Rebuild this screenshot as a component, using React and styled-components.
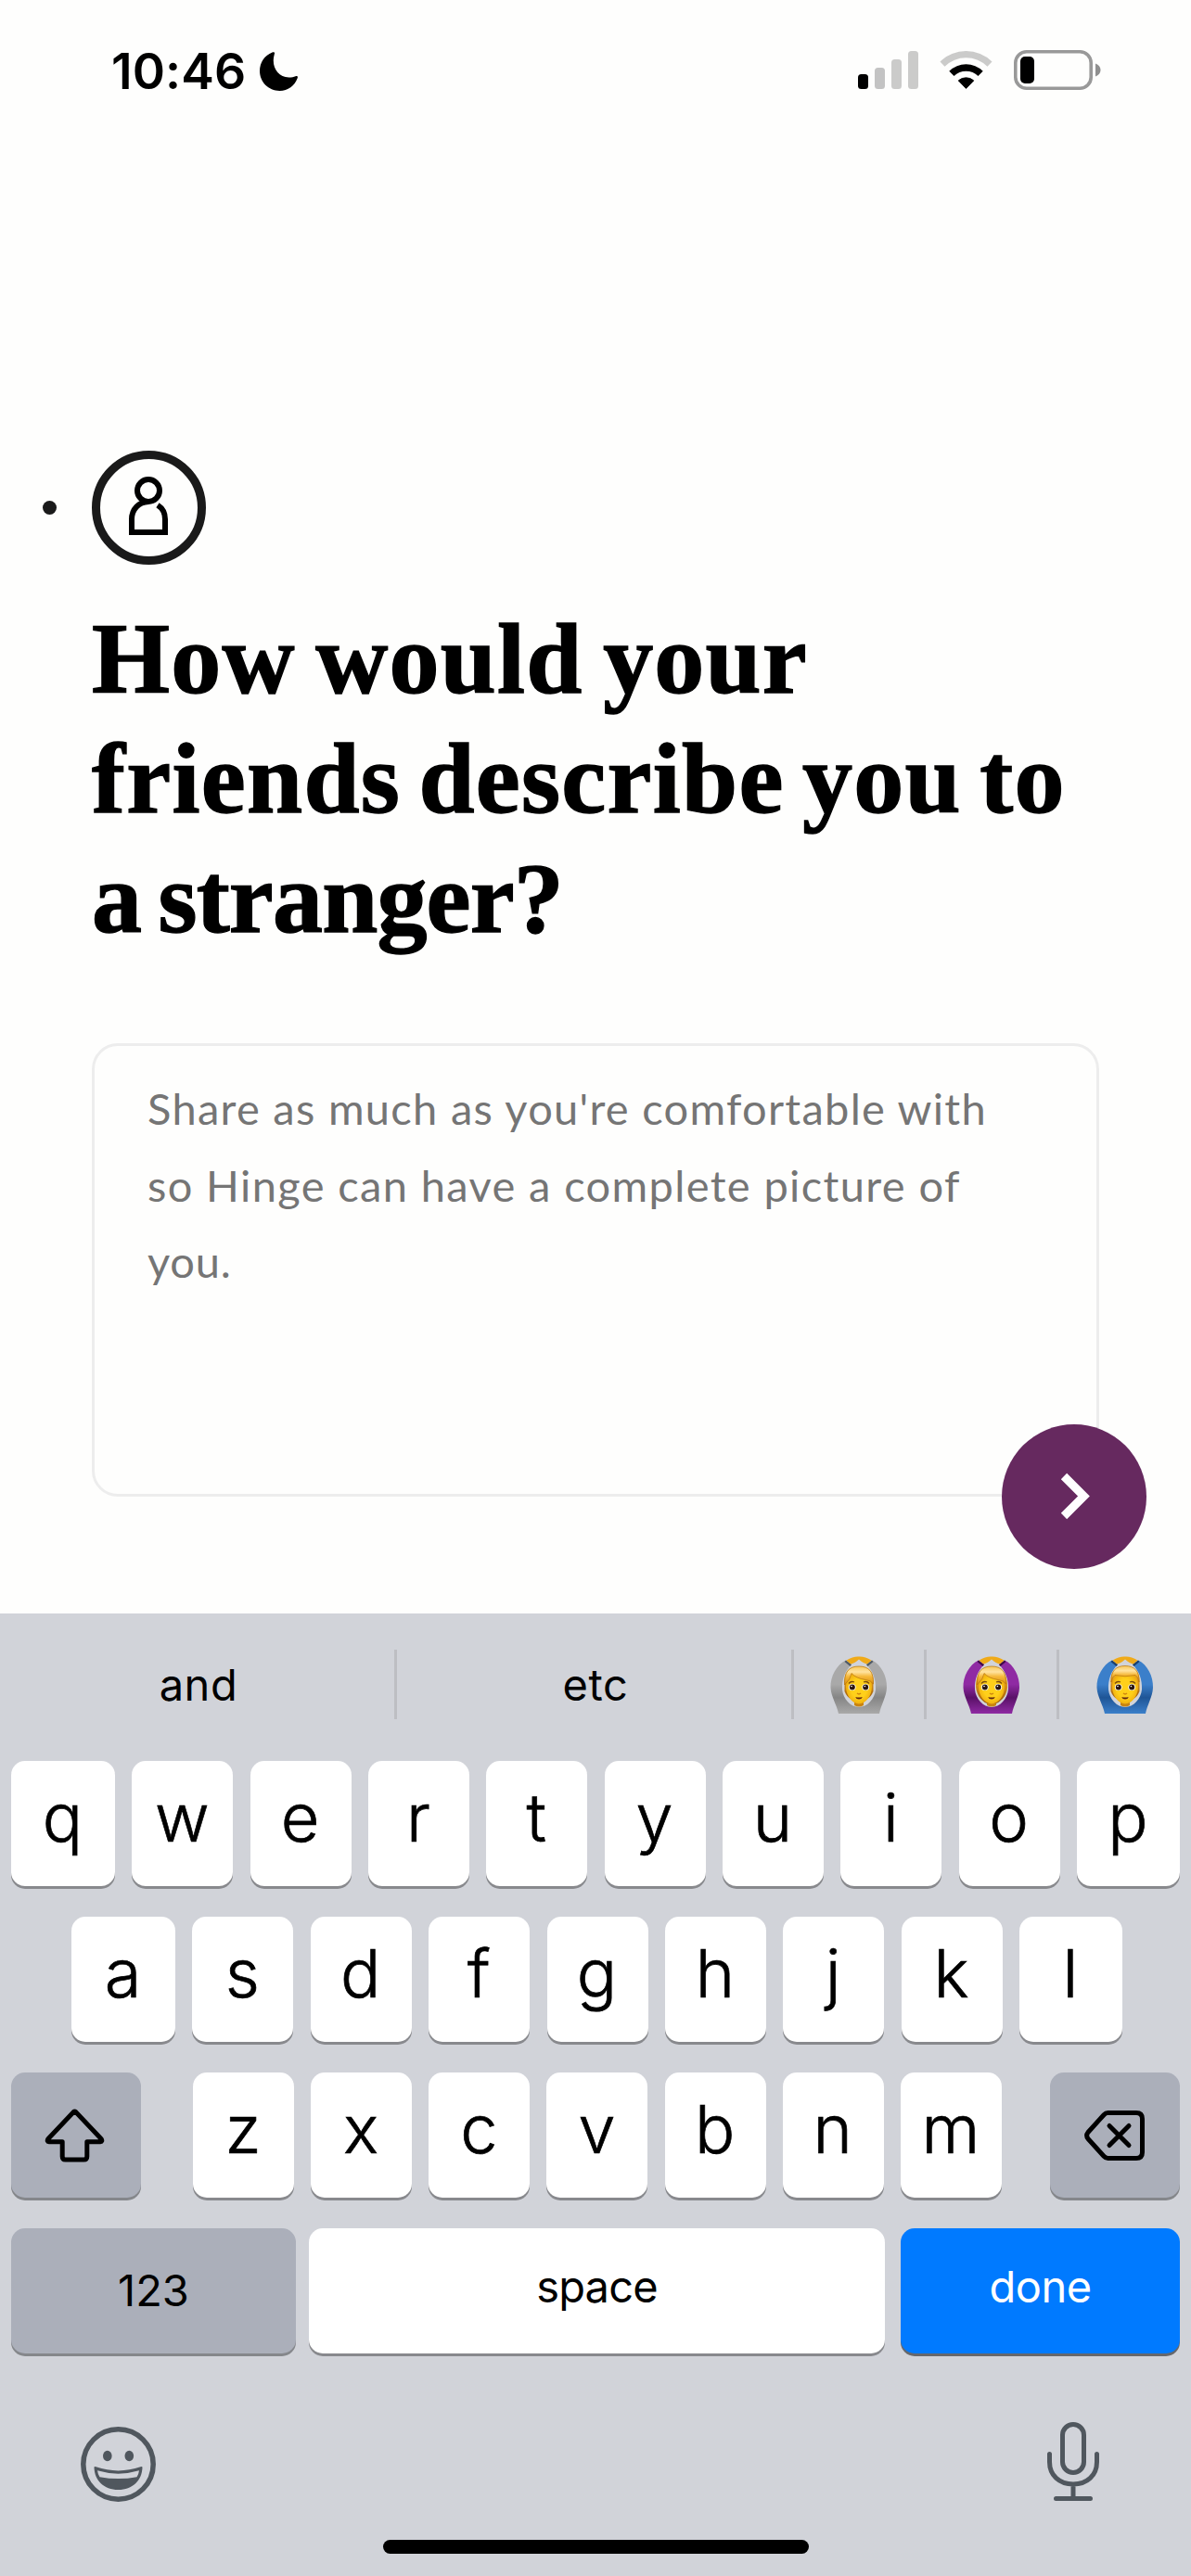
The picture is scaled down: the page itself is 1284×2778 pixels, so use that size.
import React from "react";
import styled, { createGlobalStyle } from "styled-components";

const sans = `Inter, "Liberation Sans", sans-serif`;

const GlobalStyle = createGlobalStyle`
  * { box-sizing: border-box; }
  body { margin: 0; background: #fefefd; }
`;

const Screen = styled.div`
  display: flex;
  flex-direction: column;
  width: 1284px;
  height: 2778px;
  overflow: hidden;
  background: #fefefd;
  color: #000;
  font-family: ${sans};
`;

const StatusBar = styled.header`
  display: flex;
  justify-content: space-between;
  align-items: center;
  flex: none;
  height: 154px;
  padding: 0 97px 0 120px;
`;

const Clock = styled.div`
  display: flex;
  align-items: center;
  gap: 15px;
`;

const Time = styled.span`
  width: 145px;
  font-size: 53.5px;
  font-weight: 600;
  letter-spacing: 0.1px;
  line-height: 60px;
  white-space: nowrap;
`;

const StatusIcons = styled.div`
  display: flex;
  align-items: center;
  gap: 23px;
  height: 43px;
  margin-bottom: 3px;
`;

const Main = styled.main`
  flex: none;
  height: 1586px;
  padding: 332px 99px 0;
`;

const StepRow = styled.div`
  display: flex;
  align-items: center;
  gap: 38px;
  height: 123px;
  margin-left: -53px;
`;

const StepDot = styled.span`
  width: 15px;
  height: 15px;
  border-radius: 50%;
  background: #1a1a1a;
`;

const StepBadge = styled.div`
  display: grid;
  place-items: center;
  width: 123px;
  height: 123px;
  padding: 0 1px 4px 0;
  border: 9px solid #1a1a1a;
  border-radius: 50%;
`;

const Question = styled.h1`
  height: 387px;
  margin: 37px -20px 0 0;
  font-family: "Liberation Serif", "Times New Roman", serif;
  font-size: 108px;
  font-weight: 700;
  line-height: 129px;
  -webkit-text-stroke: 1.4px #000;
`;

const QuestionLine = styled.span`
  display: block;
  letter-spacing: ${(p) => p.$spacing}px;
  word-spacing: ${(p) => p.$words}px;
  white-space: nowrap;
`;

const Answer = styled.div`
  position: relative;
  height: 489px;
  width: 1086px;
  margin-top: 92px;
  padding: 26px 57px;
  border: 3px solid #ededed;
  border-radius: 28px;
`;

const Placeholder = styled.p`
  margin: 0;
  color: #757575;
  font-family: Lato, "Open Sans", sans-serif;
  font-size: 47px;
  line-height: 82.5px;
`;

const PlaceholderLine = styled.span`
  display: block;
  letter-spacing: ${(p) => p.$spacing}px;
  white-space: nowrap;
`;

const NextButton = styled.button`
  position: absolute;
  right: -54px;
  bottom: -81px;
  display: grid;
  place-items: center;
  width: 156px;
  height: 156px;
  padding: 0;
  border: 0;
  border-radius: 50%;
  background: #66295f;
`;

const Keyboard = styled.section`
  display: flex;
  flex-direction: column;
  flex: 1;
  padding: 39px 12px 24px;
  background: #d1d3d9;
`;

const Suggestions = styled.div`
  display: flex;
  height: 75px;
  margin: 0 -12px 45px;
`;

const Suggestion = styled.div`
  display: flex;
  justify-content: center;
  align-items: center;
  flex: none;
  width: ${(p) => p.$width}px;
  padding-left: ${(p) => p.$inset || 0}px;
  border-right: ${(p) => (p.$last ? 0 : 3)}px solid #bdbec3;
  font-size: 47px;
  letter-spacing: 0.6px;
  line-height: 75px;
`;

const KeyRow = styled.div`
  display: flex;
  justify-content: space-between;
  height: 135px;
  margin: 0 ${(p) => p.$right || 0}px 33px ${(p) => p.$left || 0}px;
`;

const LetterGroup = styled.div`
  display: flex;
  justify-content: space-between;
  width: 872px;
  margin-left: 4px;
`;

const tones = {
  light: { bg: "#fff", fg: "#000", edge: "#88898d" },
  dark: { bg: "#abafba", fg: "#000", edge: "#85878b" },
  blue: { bg: "#007aff", fg: "#fff", edge: "#65676c" },
};

const Key = styled.button`
  display: flex;
  justify-content: center;
  flex: none;
  width: ${(p) => p.$width || 109}px;
  height: 135px;
  padding: 0 1px 0 0;
  border: 0;
  border-radius: 15px;
  background: ${(p) => tones[p.$tone || "light"].bg};
  box-shadow: 0 3px 0 ${(p) => tones[p.$tone || "light"].edge};
  color: ${(p) => tones[p.$tone || "light"].fg};
  font-family: ${sans};
  font-size: 72px;
  font-weight: 300;
  line-height: 122px;
  -webkit-text-stroke: 0.7px currentColor;
`;

const WordKey = styled(Key)`
  margin-left: ${(p) => p.$shift || 0}px;
  margin-right: ${(p) => -(p.$shift || 0)}px;
  padding: 0;
  font-size: 47px;
  font-weight: 400;
  letter-spacing: ${(p) => p.$spacing || 0}px;
  line-height: ${(p) => p.$line || 126}px;
  -webkit-text-stroke: 0;
`;

const IconKey = styled(Key)`
  align-items: center;
  padding-right: ${(p) => p.$nudge || 0}px;
`;

const Tools = styled.div`
  display: flex;
  justify-content: space-between;
  margin: 41px 87px 0 75px;
  height: 86px;
`;

const HomeBar = styled.div`
  width: 459px;
  height: 15px;
  margin: auto auto 0;
  border-radius: 7.5px;
  background: #000;
`;

const Moon = () => (
  <svg width="41" height="42" viewBox="0 0 41 42">
    <path d="M13.5 0.6C15.2 -0.2 16.6 0.4 15.8 2.4C12 15 19 27.5 31.5 27.5C34.5 27.5 36.5 27 38.6 26.2C40.5 25.5 41.3 26.6 40.7 28.2C37.5 36.5 30.5 42 21.5 42C9.5 42 0 32.5 0 20.6C0 11.5 5.3 3.8 13.5 0.6Z" />
  </svg>
);

const Signal = () => (
  <svg width="65" height="43" viewBox="0 0 65 43">
    <rect x="0" y="26" width="11" height="16" rx="3.5" />
    <rect x="18" y="19" width="11" height="23" rx="3.5" fill="#c3c3c3" />
    <rect x="36" y="10" width="11" height="32" rx="3.5" fill="#cbcbca" />
    <rect x="54" y="1" width="11" height="41" rx="3.5" fill="#cbcbca" />
  </svg>
);

const Wifi = () => (
  <svg width="57" height="43" viewBox="0 0 57 43">
    <path d="M0.5 12.5A40 40 0 0 1 56.5 12.5L51.5 17.8A32.5 32.5 0 0 0 5.5 17.8Z" fill="#cbcbca" />
    <path d="M10.3 22.8A26 26 0 0 1 46.7 22.8L41.5 28A18.6 18.6 0 0 0 15.5 28Z" />
    <path d="M20.2 32.9A12.5 12.5 0 0 1 36.8 32.9L28.5 41.5Z" strokeLinejoin="round" stroke="#000" strokeWidth="0.8" />
  </svg>
);

const Battery = () => (
  <svg width="94" height="43" viewBox="0 0 94 43">
    <rect x="1.8" y="1.8" width="81.4" height="39.4" rx="12" fill="none" stroke="#999" strokeWidth="3.6" />
    <rect x="7" y="7" width="15" height="29" rx="5" />
    <path d="M88 14.5C91.5 15.8 93.5 18.3 93.5 21.5S91.5 27.2 88 28.5Z" fill="#8f8f8f" />
  </svg>
);

const PersonIcon = () => (
  <svg width="42" height="63" viewBox="0 0 42 63" fill="none" stroke="#000" strokeWidth="6">
    <circle cx="21" cy="15" r="12" />
    <path d="M21 27C10.5 27.5 3 35 3 46V60H39V46C39 39.5 36 34 31 30.8" />
  </svg>
);

const Chevron = () => (
  <svg width="60" height="60" viewBox="0 0 60 60" fill="none" stroke="#fff" strokeWidth="9">
    <path d="M19 8L40.5 29.5L19 51" />
  </svg>
);

const ShiftIcon = () => (
  <svg width="66" height="60" viewBox="0 0 66 60" fill="none" stroke="#000" strokeWidth="5" strokeLinejoin="round">
    <path d="M31.2 4.7Q32.5 3.5 33.8 4.7L61 33.5Q63 36.5 60 36.8H45.8V52.5Q45.8 56 42.5 56H22.5Q19.2 56 19.2 52.5V36.8H5Q2 36.5 4 33.5Z" />
  </svg>
);

const DeleteIcon = () => (
  <svg width="66" height="56" viewBox="0 0 66 56" fill="none" stroke="#000" strokeWidth="5" strokeLinecap="round" strokeLinejoin="round">
    <path d="M25.5 3.5H56Q62.5 3.5 62.5 10V46Q62.5 52.5 56 52.5H25.5Q23 52.5 21 50.3L4 31.5Q1.3 28 4 24.5L21 5.7Q23 3.5 25.5 3.5Z" />
    <path d="M27 17.5L48 38.5M48 17.5L27 38.5" />
  </svg>
);

const SmileIcon = () => (
  <svg width="81" height="86" viewBox="0 -4.5 81 86" fill="none">
    <circle cx="40.5" cy="41" r="37.7" stroke="#50575e" strokeWidth="5.5" />
    <ellipse cx="28.8" cy="32" rx="4.8" ry="5.8" fill="#50575e" />
    <ellipse cx="52.3" cy="32" rx="4.8" ry="5.8" fill="#50575e" />
    <path d="M14.5 44.5Q14.5 43 16.5 43.8Q40.5 52 64.5 43.8Q66.5 43 66.5 44.5C66 58.5 56 68.5 40.5 68.5S15 58.5 14.5 44.5Z" fill="#50575e" />
    <path d="M18 47.8Q40.5 54.5 63 47.8Q62.5 52 60.5 54.7Q40.5 58.5 20.5 54.7Q18.5 52 18 47.8Z" fill="#d1d3d9" />
  </svg>
);

const MicIcon = () => (
  <svg width="56" height="86" viewBox="0 0 56 86" fill="none" stroke="#50575e" strokeWidth="5" strokeLinecap="round">
    <rect x="16.5" y="2.5" width="23" height="52" rx="11.5" />
    <path d="M2.5 34.5V43C2.5 57.5 13 67 28 67S53.5 57.5 53.5 43V34.5M28 67V81M9.5 82.5H46.5" />
  </svg>
);

const FaceEmoji = ({ id, sleeve, shade, cuff, long, parted }) => (
  <svg width="62" height="62" viewBox="0 0 62 62">
    <defs>
      <linearGradient id={`sleeve-${id}`} x1="0" y1="0" x2="0" y2="1">
        <stop offset="0" stopColor={sleeve} />
        <stop offset="0.45" stopColor={sleeve} />
        <stop offset="0.7" stopColor={shade} />
        <stop offset="1" stopColor={sleeve} />
      </linearGradient>
      <linearGradient id={`hair-${id}`} x1="0" y1="0" x2="0" y2="1">
        <stop offset="0" stopColor="#f6bd45" />
        <stop offset="0.4" stopColor="#e39d1c" />
        <stop offset="1" stopColor="#9c5a08" />
      </linearGradient>
      <linearGradient id={`fringe-${id}`} x1="0" y1="0" x2="0" y2="1">
        <stop offset="0" stopColor="#f7c75a" />
        <stop offset="0.3" stopColor="#ffe3a0" />
        <stop offset="0.55" stopColor="#f6b93a" />
        <stop offset="1" stopColor="#d68c0d" />
      </linearGradient>
      <radialGradient id={`skin-${id}`} cx="0.5" cy="0.5" r="0.6">
        <stop offset="0.5" stopColor="#ffd01a" />
        <stop offset="1" stopColor="#e9a10c" />
      </radialGradient>
    </defs>
    <path
      fillRule="evenodd"
      fill={`url(#sleeve-${id})`}
      d="M17 4.5L23 9C16 16 12.5 25 13 36C14 46 22 55 31 55S48 46 49 36C49.5 25 46 16 39 9L45 4.5C55 9 61.5 22 61 34C60.5 44 55 52 53 62H9C7 52 1 44 0.5 34C0 22 7 9 17 4.5Z"
    />
    <path d="M17 4.5L23 9L21.5 11L15.5 6Z" fill={cuff} />
    <path d="M45 4.5L39 9L40.5 11L46.5 6Z" fill={cuff} />
    <path d="M17.5 4.5Q25 0 31 0.5Q37 0 44.5 4.5L40 8.5Q36 8 31 3.5Q26 8 22 8.5Z" fill="#f0aa18" />
    <path d="M26 45H36V53Q31 56 26 53Z" fill="#c98410" />
    {long ? (
      <path d="M31 11C19 11 15 20 14 30C13.5 40 19 48 26 51H36C43 48 49 40 48 30C47 20 43 11 31 11Z" fill={`url(#hair-${id})`} />
    ) : (
      <path d="M31 11C20 11 15.5 17 15.5 27V38Q18 44 22 46H40Q44 44 46.5 38V27C46.5 17 42 11 31 11Z" fill={`url(#hair-${id})`} />
    )}
    <path d="M31 18C21 18 17 24 17 33C17 43 24 51.5 31 51.5S45 43 45 33C45 24 41 18 31 18Z" fill={`url(#skin-${id})`} />
    {parted ? (
      <path
        d="M15.5 31C15 17 20 11 31 11S47 17 46.5 30Q44 26 38 25.5Q28 24 23 18.5Q22 25 15.5 31Z"
        fill={`url(#fringe-${id})`}
        stroke="#b8740b"
        strokeWidth="0.7"
      />
    ) : (
      <path
        d="M16 28C15.5 16 21 10.5 31 10.5S46.5 16 46 28Q45 22 42 20.5Q31 23 20 20.5Q17 22 16 28Z"
        fill={`url(#fringe-${id})`}
        stroke="#b8740b"
        strokeWidth="0.7"
      />
    )}
    <path d="M20 29.5Q22.5 26.5 26 28M36 28Q39.5 26.5 42 29.5" fill="none" stroke="#7c4c0b" strokeWidth="1.3" />
    <ellipse cx="23.8" cy="33.5" rx="3.9" ry="3.5" fill="#fff" />
    <ellipse cx="38.2" cy="33.5" rx="3.9" ry="3.5" fill="#fff" />
    <circle cx="23.8" cy="33.5" r="3" fill="#2b1710" />
    <circle cx="38.2" cy="33.5" r="3" fill="#2b1710" />
    <circle cx="23" cy="32.5" r="0.8" fill="#fff" />
    <circle cx="37.4" cy="32.5" r="0.8" fill="#fff" />
    <path d="M29 40Q31 41.8 33 40" fill="none" stroke="#cf860f" strokeWidth="1.4" />
    <path d="M27.2 44Q31 45 34.8 44Q34 46.5 31 46.5T27.2 44Z" fill="#5e2410" />
  </svg>
);

const letterWidth = (i, count) => (i === 0 ? 112 : i === count - 1 ? 111 : 109);

const EdgeRow = ({ letters, left, right }) => (
  <KeyRow $left={left} $right={right}>
    {[...letters].map((c, i) => (
      <Key key={c} $width={letterWidth(i, letters.length)}>{c}</Key>
    ))}
  </KeyRow>
);

export default function App() {
  return (
    <Screen>
      <GlobalStyle />
      <StatusBar>
        <Clock>
          <Time>10:46</Time>
          <Moon />
        </Clock>
        <StatusIcons>
          <Signal />
          <Wifi />
          <Battery />
        </StatusIcons>
      </StatusBar>

      <Main>
        <StepRow>
          <StepDot />
          <StepBadge>
            <PersonIcon />
          </StepBadge>
        </StepRow>
        <Question>
          <QuestionLine $spacing={1.2} $words={-6.5}>How would your</QuestionLine>
          <QuestionLine $spacing={1.3} $words={-9}>friends describe you to</QuestionLine>
          <QuestionLine $spacing={-0.8} $words={-8}>a stranger?</QuestionLine>
        </Question>
        <Answer>
          <Placeholder>
            <PlaceholderLine $spacing={1.28}>Share as much as you're comfortable with</PlaceholderLine>
            <PlaceholderLine $spacing={1.36}>so Hinge can have a complete picture of</PlaceholderLine>
            <PlaceholderLine $spacing={0.8}>you.</PlaceholderLine>
          </Placeholder>
          <NextButton aria-label="Next">
            <Chevron />
          </NextButton>
        </Answer>
      </Main>

      <Keyboard>
        <Suggestions>
          <Suggestion $width={428} $inset={3}>and</Suggestion>
          <Suggestion $width={428} $inset={3}>etc</Suggestion>
          <Suggestion $width={143}>
            <FaceEmoji id="a" sleeve="#a9a9a9" shade="#858585" cuff="#4f5a66" parted />
          </Suggestion>
          <Suggestion $width={143}>
            <FaceEmoji id="b" sleeve="#8f2aa3" shade="#5a1168" cuff="#3d0a48" long parted />
          </Suggestion>
          <Suggestion $width={142} $last>
            <FaceEmoji id="c" sleeve="#3b7fca" shade="#1f5596" cuff="#1d3f6b" />
          </Suggestion>
        </Suggestions>

        <EdgeRow letters="qwertyuiop" />
        <EdgeRow letters="asdfghjkl" left={65} right={62} />
        <KeyRow>
          <IconKey $width={140} $tone="dark" $nudge={3} aria-label="Shift">
            <ShiftIcon />
          </IconKey>
          <LetterGroup>
            {[..."zxcvbnm"].map((c) => (
              <Key key={c}>{c}</Key>
            ))}
          </LetterGroup>
          <IconKey $width={140} $tone="dark" aria-label="Delete">
            <DeleteIcon />
          </IconKey>
        </KeyRow>
        <KeyRow>
          <WordKey $width={307} $tone="dark" $line={134}>123</WordKey>
          <WordKey $width={621} $shift={-1.5} $spacing={-0.8}>space</WordKey>
          <WordKey $width={301} $tone="blue" $spacing={-0.5}>done</WordKey>
        </KeyRow>

        <Tools>
          <SmileIcon />
          <MicIcon />
        </Tools>
        <HomeBar />
      </Keyboard>
    </Screen>
  );
}
